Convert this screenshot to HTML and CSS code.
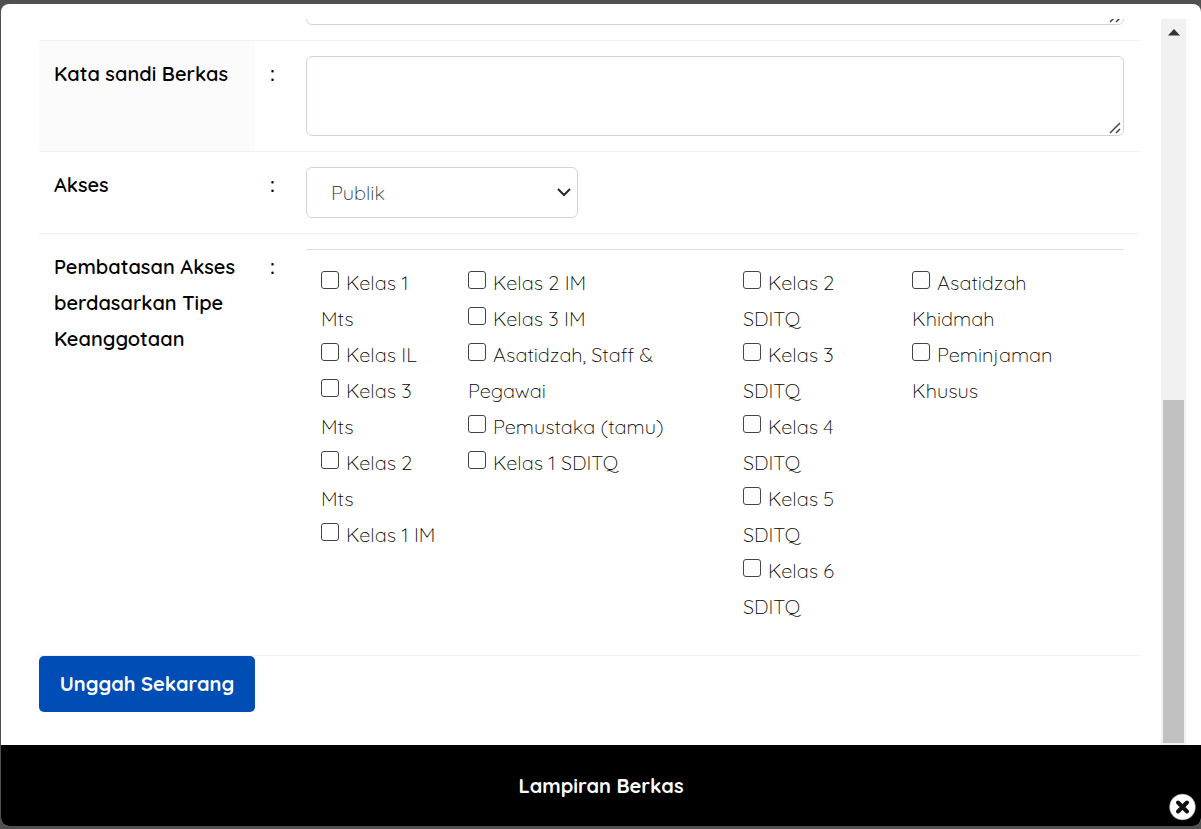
FILE: index.html
```html
<!DOCTYPE html>
<html lang="id">
<head>
<meta charset="utf-8">
<title>Lampiran Berkas</title>
<link rel="stylesheet" href="styles.css">
</head>
<body>
<main class="dialog" role="dialog" aria-labelledby="dialog-title">
  <div class="dialog-body">
    <form class="upload-form">
      <table class="form-table">
        <tr>
          <th class="label-cell"></th>
          <td class="colon-cell"></td>
          <td class="field-cell"><div class="textarea-wrap"><textarea class="textarea" aria-label="Deskripsi Berkas"></textarea><svg class="grip" viewBox="0 0 12 12" aria-hidden="true"><path d="M1 11 11 1M7 11l4-4"/></svg></div></td>
        </tr>
        <tr>
          <th class="label-cell label-shaded"><label for="password">Kata sandi Berkas</label></th>
          <td class="colon-cell">:</td>
          <td class="field-cell"><div class="textarea-wrap"><textarea class="textarea" id="password"></textarea><svg class="grip" viewBox="0 0 12 12" aria-hidden="true"><path d="M1 11 11 1M7 11l4-4"/></svg></div></td>
        </tr>
        <tr>
          <th class="label-cell"><label for="access">Akses</label></th>
          <td class="colon-cell">:</td>
          <td class="field-cell">
            <div class="select-wrap">
              <select class="select" id="access"><option>Publik</option><option>Privat</option></select>
              <svg class="chevron" viewBox="0 0 14 10" aria-hidden="true"><path d="m1 2 6 6 6-6"/></svg>
            </div>
          </td>
        </tr>
        <tr>
          <th class="label-cell">Pembatasan Akses berdasarkan Tipe Keanggotaan</th>
          <td class="colon-cell">:</td>
          <td class="field-cell">
            <div class="members">
              <div class="member-col">
                <label><input class="check" type="checkbox">Kelas 1<br>Mts</label>
                <label><input class="check" type="checkbox">Kelas IL</label>
                <label><input class="check" type="checkbox">Kelas 3<br>Mts</label>
                <label><input class="check" type="checkbox">Kelas 2<br>Mts</label>
                <label><input class="check" type="checkbox">Kelas 1 IM</label>
              </div>
              <div class="member-col">
                <label><input class="check" type="checkbox">Kelas 2 IM</label>
                <label><input class="check" type="checkbox">Kelas 3 IM</label>
                <label><input class="check" type="checkbox">Asatidzah, Staff &amp;<br>Pegawai</label>
                <label><input class="check" type="checkbox">Pemustaka (tamu)</label>
                <label><input class="check" type="checkbox">Kelas 1 SDITQ</label>
              </div>
              <div class="member-col">
                <label><input class="check" type="checkbox">Kelas 2<br>SDITQ</label>
                <label><input class="check" type="checkbox">Kelas 3<br>SDITQ</label>
                <label><input class="check" type="checkbox">Kelas 4<br>SDITQ</label>
                <label><input class="check" type="checkbox">Kelas 5<br>SDITQ</label>
                <label><input class="check" type="checkbox">Kelas 6<br>SDITQ</label>
              </div>
              <div class="member-col">
                <label><input class="check" type="checkbox">Asatidzah<br>Khidmah</label>
                <label><input class="check" type="checkbox">Peminjaman<br>Khusus</label>
              </div>
            </div>
          </td>
        </tr>
        <tr>
          <td class="action-cell" colspan="3"><button class="submit" type="submit">Unggah Sekarang</button></td>
        </tr>
      </table>
    </form>
    <div class="scrollbar" aria-hidden="true">
      <svg class="scroll-arrow" viewBox="0 0 12 7"><path d="M0 6.500 6 0l6 6.500z"/></svg>
      <div class="scroll-thumb"></div>
    </div>
  </div>
  <footer class="dialog-footer"><h1 class="dialog-title" id="dialog-title">Lampiran Berkas</h1></footer>
  <button class="close" type="button" aria-label="Tutup">
    <svg class="close-icon" viewBox="0 0 28 28" aria-hidden="true"><circle cx="14.500" cy="14" r="13" fill="#fff" stroke="#777" stroke-width=".5"/><path d="m10 9.500 9 9M19 9.500l-9 9" stroke="#111" stroke-width="4" stroke-linecap="round"/></svg>
  </button>
</main>
</body>
</html>
```
FILE: styles.css
```css
* { box-sizing: border-box; }

body {
  margin: 0;
  height: 100vh;
  padding: 4px 0 3px 1px;
  overflow: hidden;
  background: #505050;
  color: #000;
  font: 300 20px/36px Quicksand, Lato, sans-serif;
}

.dialog {
  position: relative;
  display: flex;
  flex-direction: column;
  height: 100%;
  overflow: hidden;
  border-radius: 8px;
  background: #fff;
}

.dialog-body {
  display: flex;
  flex: 1;
  gap: 21px;
  min-height: 0;
  margin-top: 15px;
  padding: 0 15px 0 38px;
  overflow: hidden;
}

.upload-form {
  display: flex;
  flex: 1;
  flex-direction: column;
  justify-content: flex-end;
  padding-bottom: 33px;
}

.form-table {
  width: 100%;
  border-spacing: 0;
  table-layout: fixed;
}

.form-table th,
.form-table td {
  padding: 15px;
  border-top: 1px solid #f0f0f0;
  text-align: left;
  vertical-align: top;
}

.form-table .label-cell { width: 216px; font-weight: 600; }
.form-table .label-shaded { background: #fbfbfb; }
.form-table .colon-cell { width: 36px; font-weight: 600; }
.form-table .field-cell { padding-right: 16px; }
.form-table .action-cell { padding: 0; }

.textarea-wrap,
.select-wrap { position: relative; }

.textarea {
  display: block;
  width: 100%;
  height: 80px;
  padding: 6px 24px;
  border: 1px solid #ced4da;
  border-radius: 6px;
  background: #fff;
  font: inherit;
  resize: none;
}

.grip {
  position: absolute;
  right: 3px;
  bottom: 2px;
  width: 12px;
  height: 12px;
  fill: none;
  stroke: #444;
  stroke-width: 1.5;
}

.select-wrap { width: 272px; }

.select {
  display: block;
  width: 100%;
  height: 51px;
  padding: 0 24px;
  border: 1px solid #ced4da;
  border-radius: 6px;
  appearance: none;
  background: #fff;
  color: #212b36;
  font: inherit;
}

.chevron {
  position: absolute;
  top: 20px;
  right: 7px;
  width: 14px;
  height: 10px;
  fill: none;
  stroke: #212b36;
  stroke-width: 2;
  pointer-events: none;
}

.members {
  display: grid;
  grid-template-columns: 147fr 275fr 169fr 227fr;
  border-top: 1px solid #dcdfe2;
}

.member-col { padding: 15px; white-space: nowrap; }
.member-col label { display: block; }

.check {
  width: 18px;
  height: 18px;
  margin: 0 7px 1px 0;
  border: 1px solid #444;
  border-radius: 3px;
  appearance: none;
  background: #fff;
}

.submit {
  display: block;
  width: 216px;
  height: 56px;
  padding: 0;
  border: 0;
  border-radius: 5px;
  background: #004db6;
  color: #fff;
  font: inherit;
  font-weight: 700;
}

.scrollbar {
  display: flex;
  flex-direction: column;
  align-items: center;
  justify-content: space-between;
  width: 25px;
  padding: 10px 2px 2px;
  background: #f1f1f1;
}

.scroll-arrow { width: 12px; height: 7px; fill: #333; }

.scroll-thumb {
  width: 100%;
  height: 48%;
  background: #c1c1c1;
}

.dialog-footer {
  padding: 23px 15px 22px;
  background: #000;
  color: #fff;
  text-align: center;
}

.dialog-title { margin: 0; font-size: 20px; font-weight: 700; }

.close {
  position: absolute;
  right: 5px;
  bottom: 5px;
  width: 28px;
  height: 28px;
  padding: 0;
  border: 0;
  background: none;
}

.close-icon { display: block; width: 28px; height: 28px; }
```
